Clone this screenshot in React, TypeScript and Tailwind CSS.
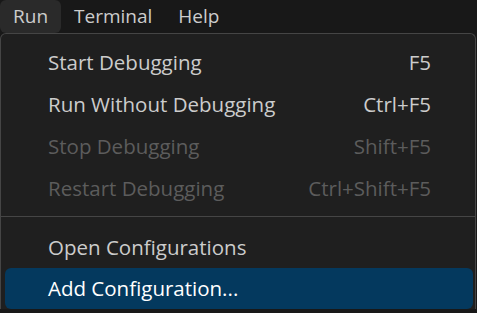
const items = [
  { label: "Start Debugging", keys: "F5" },
  { label: "Run Without Debugging", keys: "Ctrl+F5" },
  { label: "Stop Debugging", keys: "Shift+F5", disabled: true },
  { label: "Restart Debugging", keys: "Ctrl+Shift+F5", disabled: true },
];

export default function App() {
  return (
    <div
      className="h-[313px] w-[477px] overflow-hidden bg-[#181818] text-[#cccccc]"
      style={{ fontFamily: '"Open Sans", "Noto Sans", sans-serif' }}
    >
      <nav className="flex h-[33px] items-center text-[19px]">
        <div className="flex h-full items-center rounded-[6px] bg-[#2a2a2a] px-[13px]">Run</div>
        <div className="flex h-full items-center px-[13px]">Terminal</div>
        <div className="flex h-full items-center px-[13px]">Help</div>
      </nav>
      <div className="w-[476px] rounded-t-[6px] border border-b-0 border-[#454545] bg-[#1f1f1f] pt-[7px] text-[20.5px]">
        {items.map((item) => (
          <div
            key={item.label}
            className={`flex h-[42px] items-center justify-between pl-[47px] pr-[44px] ${
              item.disabled ? "text-[#5c5c5c]" : "text-[#cccccc]"
            }`}
          >
            <span>{item.label}</span>
            <span>{item.keys}</span>
          </div>
        ))}
        <div className="pb-[9px] pt-[7px]">
          <div className="h-px bg-[#454545]" />
        </div>
        <div className="flex h-[42px] items-center pl-[47px]">Open Configurations</div>
        <div className="ml-[4px] mr-[2px] flex h-[41px] items-center rounded-[6px] bg-[#04395e] pl-[43px] text-white">
          Add Configuration...
        </div>
      </div>
    </div>
  );
}
